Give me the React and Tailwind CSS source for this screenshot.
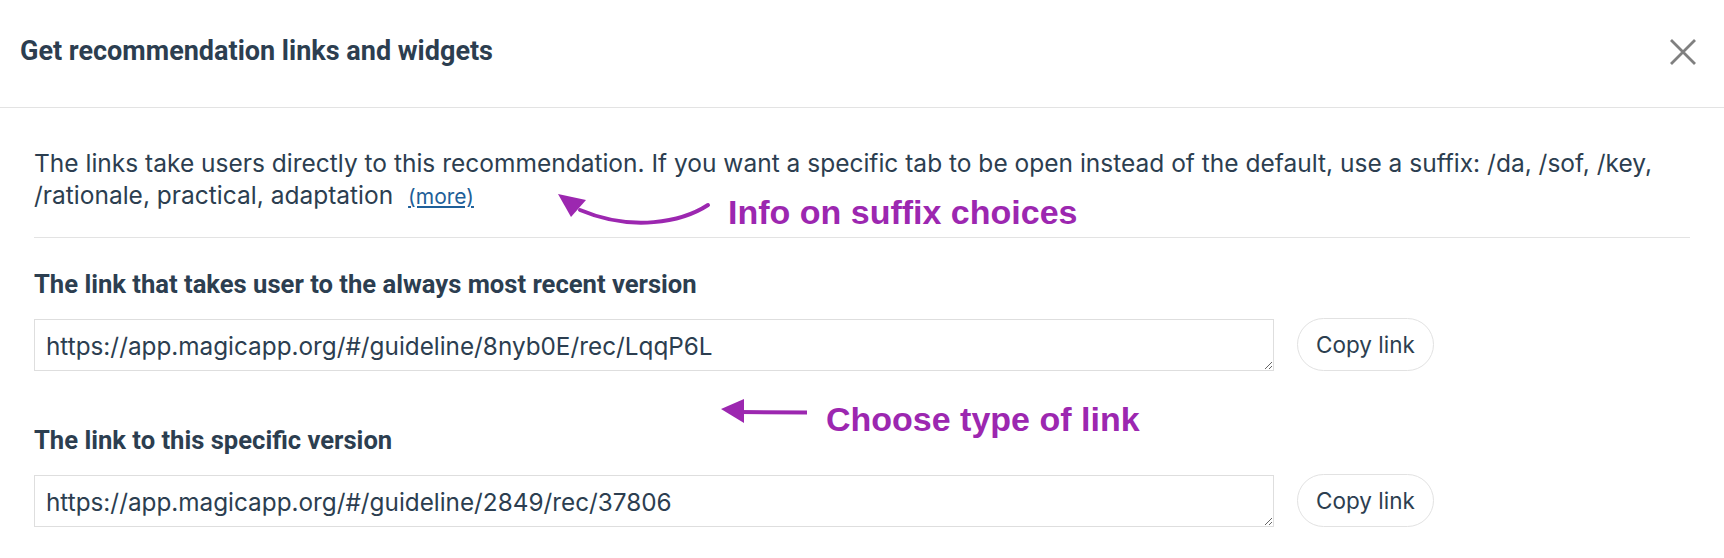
import React from "react";

function CurvedArrow() {
  return (
    <svg width="160" height="50" viewBox="0 0 160 50" className="absolute left-[552px] top-[188px]" fill="none">
      <path d="M156 17 C 130 34, 80 44, 28 22" stroke="#9c27b0" strokeWidth="4" strokeLinecap="round" />
      <polygon points="6,6 34,12 19,29" fill="#9c27b0" />
    </svg>
  );
}

function StraightArrow() {
  return (
    <svg width="92" height="28" viewBox="0 0 92 28" className="absolute left-[718px] top-[398px]" fill="none">
      <line x1="22" y1="14" x2="89" y2="14.5" stroke="#9c27b0" strokeWidth="4" />
      <polygon points="3,11 26,1 26,25" fill="#9c27b0" />
    </svg>
  );
}

function LinkRow({ label, url }) {
  return (
    <div className="flex flex-col gap-[20px]">
      <h3 className="text-[25.6px] leading-7 font-bold text-[#2c3e50] font-['Roboto',sans-serif]">{label}</h3>
      <div className="flex items-center gap-[23px]">
        <textarea
          readOnly
          value={url}
          className="w-[1240px] h-[52px] border border-[#dedede] px-[11px] py-[10px] text-[24.3px] leading-8 text-[#2c3e50] outline-none"
        />
        <button className="h-[53px] w-[137px] rounded-full border border-[#e2e2e2] bg-white text-[22.5px] text-[#2c3e50]">
          Copy link
        </button>
      </div>
    </div>
  );
}

export default function App() {
  return (
    <div className="relative min-h-screen bg-white font-['Inter',sans-serif] text-[#2c3e50]">

      {/* Header */}
      <div className="h-[108px] flex items-center justify-between pl-5 pr-[25px] pb-1 border-b border-[#e3e3e3]">
        <h2 className="text-[27px] font-bold font-['Roboto',sans-serif] text-[#2c3e50]">
          Get recommendation links and widgets
        </h2>
        <button className="w-8 h-8 flex items-center justify-center">
          <svg width="26" height="26" viewBox="0 0 26 26">
            <path d="M1 1 L25 25 M25 1 L1 25" stroke="#808080" strokeWidth="2.8" />
          </svg>
        </button>
      </div>

      {/* Body */}
      <div className="flex flex-col px-[34px] pt-[39px] pb-[30px]">
        <p className="text-[24.5px] leading-8 text-[#2c3e50] pb-[24px] border-b border-[#e3e3e3]">
          The links take users directly to this recommendation. If you want a specific tab to be open instead of the default, use a suffix: /da, /sof, /key, /rationale, practical, adaptation{" "}
          <a href="#" className="ml-2 text-[21px] text-[#1f5f99] underline">(more)</a>
        </p>

        <div className="flex flex-col gap-[55px] pt-[32px]">
          <LinkRow
            label="The link that takes user to the always most recent version"
            url="https://app.magicapp.org/#/guideline/8nyb0E/rec/LqqP6L"
          />
          <LinkRow
            label="The link to this specific version"
            url="https://app.magicapp.org/#/guideline/2849/rec/37806"
          />
        </div>
      </div>

      {/* Annotations */}
      <CurvedArrow />
      <span className="absolute left-[728px] top-[192px] text-[34px] leading-10 font-bold text-[#9c27b0] font-['Liberation_Sans',Arial,sans-serif]">
        Info on suffix choices
      </span>
      <StraightArrow />
      <span className="absolute left-[826px] top-[399px] text-[34px] leading-10 font-bold text-[#9c27b0] font-['Liberation_Sans',Arial,sans-serif]">
        Choose type of link
      </span>
    </div>
  );
}
